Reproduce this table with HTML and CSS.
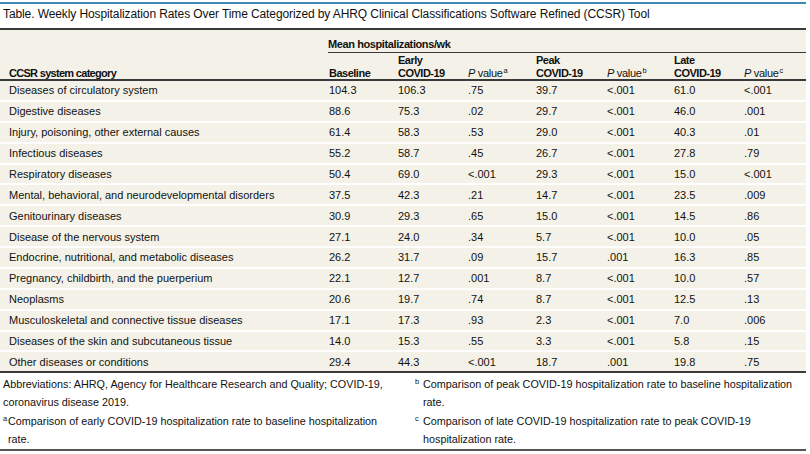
FILE: index.html
```html
<!DOCTYPE html>
<html lang="en">
<head>
<meta charset="utf-8">
<title>Weekly Hospitalization Rates</title>
<link rel="stylesheet" href="styles.css">
</head>
<body>
<div class="page">
  <div class="title">Table. Weekly Hospitalization Rates Over Time Categorized by AHRQ Clinical Classifications Software Refined (CCSR) Tool</div>
  <table class="data">
    <colgroup>
      <col class="w-cat"><col class="w1"><col class="w2"><col class="w3"><col class="w4"><col class="w5"><col class="w6"><col class="w7">
    </colgroup>
    <thead>
      <tr class="h1">
        <th rowspan="2" class="cat">CCSR system category</th>
        <th colspan="7" class="span"><div class="span-inner">Mean hospitalizations/wk</div></th>
      </tr>
      <tr class="h2">
        <th>Baseline</th>
        <th>Early<br>COVID-19</th>
        <th class="pv"><i>P</i> value<sup class="s">a</sup></th>
        <th>Peak<br>COVID-19</th>
        <th class="pv"><i>P</i> value<sup class="s">b</sup></th>
        <th>Late<br>COVID-19</th>
        <th class="pv"><i>P</i> value<sup class="s">c</sup></th>
      </tr>
    </thead>
    <tbody>
      <tr><td>Diseases of circulatory system</td><td>104.3</td><td>106.3</td><td>.75</td><td>39.7</td><td>&lt;.001</td><td>61.0</td><td>&lt;.001</td></tr>
      <tr><td>Digestive diseases</td><td>88.6</td><td>75.3</td><td>.02</td><td>29.7</td><td>&lt;.001</td><td>46.0</td><td>.001</td></tr>
      <tr><td>Injury, poisoning, other external causes</td><td>61.4</td><td>58.3</td><td>.53</td><td>29.0</td><td>&lt;.001</td><td>40.3</td><td>.01</td></tr>
      <tr><td>Infectious diseases</td><td>55.2</td><td>58.7</td><td>.45</td><td>26.7</td><td>&lt;.001</td><td>27.8</td><td>.79</td></tr>
      <tr><td>Respiratory diseases</td><td>50.4</td><td>69.0</td><td>&lt;.001</td><td>29.3</td><td>&lt;.001</td><td>15.0</td><td>&lt;.001</td></tr>
      <tr><td>Mental, behavioral, and neurodevelopmental disorders</td><td>37.5</td><td>42.3</td><td>.21</td><td>14.7</td><td>&lt;.001</td><td>23.5</td><td>.009</td></tr>
      <tr><td>Genitourinary diseases</td><td>30.9</td><td>29.3</td><td>.65</td><td>15.0</td><td>&lt;.001</td><td>14.5</td><td>.86</td></tr>
      <tr><td>Disease of the nervous system</td><td>27.1</td><td>24.0</td><td>.34</td><td>5.7</td><td>&lt;.001</td><td>10.0</td><td>.05</td></tr>
      <tr><td>Endocrine, nutritional, and metabolic diseases</td><td>26.2</td><td>31.7</td><td>.09</td><td>15.7</td><td>.001</td><td>16.3</td><td>.85</td></tr>
      <tr><td>Pregnancy, childbirth, and the puerperium</td><td>22.1</td><td>12.7</td><td>.001</td><td>8.7</td><td>&lt;.001</td><td>10.0</td><td>.57</td></tr>
      <tr><td>Neoplasms</td><td>20.6</td><td>19.7</td><td>.74</td><td>8.7</td><td>&lt;.001</td><td>12.5</td><td>.13</td></tr>
      <tr><td>Musculoskeletal and connective tissue diseases</td><td>17.1</td><td>17.3</td><td>.93</td><td>2.3</td><td>&lt;.001</td><td>7.0</td><td>.006</td></tr>
      <tr><td>Diseases of the skin and subcutaneous tissue</td><td>14.0</td><td>15.3</td><td>.55</td><td>3.3</td><td>&lt;.001</td><td>5.8</td><td>.15</td></tr>
      <tr><td>Other diseases or conditions</td><td>29.4</td><td>44.3</td><td>&lt;.001</td><td>18.7</td><td>.001</td><td>19.8</td><td>.75</td></tr>
    </tbody>
  </table>
  <div class="notes">
    <div class="col col-left">
      <p>Abbreviations: AHRQ, Agency for Healthcare Research and Quality; COVID-19,<br>coronavirus disease 2019.</p>
      <p class="fn"><span class="mk">a</span>Comparison of early COVID-19 hospitalization rate to baseline hospitalization<br>rate.</p>
    </div>
    <div class="col col-right">
      <p class="fn"><span class="mk">b</span>Comparison of peak COVID-19 hospitalization rate to baseline hospitalization<br>rate.</p>
      <p class="fn"><span class="mk">c</span>Comparison of late COVID-19 hospitalization rate to peak COVID-19<br>hospitalization rate.</p>
    </div>
  </div>
</div>
</body>
</html>
```

FILE: styles.css
```css
html, body {
  margin: 0;
  padding: 0;
  background: #ffffff;
}

body {
  font-family: "Liberation Sans", Arial, sans-serif;
  color: #111111;
}

.page {
  width: 806px;
  padding-top: 2px;
}

.title {
  border-top: 2px solid #3f8ab5;
  border-bottom: 2px solid #3a3a3a;
  padding: 0 3px 3px;
  font-size: 12px;
  letter-spacing: -0.1px;
  line-height: 21px;
  white-space: nowrap;
}

.data {
  width: 806px;
  table-layout: fixed;
  border-collapse: separate;
  border-spacing: 0;
  background: #f4f2e8;
  font-size: 11px;
}

.w-cat { width: 321px; }
.w1 { width: 69px; }
.w2 { width: 70px; }
.w3 { width: 68px; }
.w4 { width: 71px; }
.w5 { width: 67px; }
.w6 { width: 70px; }
.w7 { width: 70px; }

.data th {
  text-align: left;
  font-weight: bold;
  letter-spacing: -0.5px;
  padding: 1px 0 0 8px;
  line-height: 12.5px;
  vertical-align: bottom;
  white-space: nowrap;
}

.data th.cat {
  padding-left: 9px;
  letter-spacing: -0.7px;
  border-bottom: 2px solid #3a3a3a;
}

.data .h1 th.span {
  padding: 7px 0 0 7px;
  letter-spacing: -0.4px;
  line-height: 14px;
}

.span-inner {
  padding-bottom: 1px;
  border-bottom: 1px solid #3a3a3a;
}

.data .h2 th {
  border-bottom: 2px solid #3a3a3a;
}

.data th.pv {
  font-weight: normal;
  letter-spacing: -0.3px;
}

.s {
  font-size: 7.5px;
  line-height: 1;
  vertical-align: 4px;
  margin-left: 1px;
}

.data td {
  padding: 2.45px 0 2.45px 8px;
  line-height: 14px;
  white-space: nowrap;
}

.data td:first-child {
  padding-left: 9px;
}

.data tbody tr + tr td {
  border-top: 2px solid #ffffff;
}

.notes {
  display: grid;
  grid-template-columns: 412px 1fr;
  padding: 2px 0 0 3px;
  border-top: 2px solid #3a3a3a;
  border-bottom: 2px solid #555555;
  font-size: 10.8px;
  line-height: 18px;
}

.notes p {
  margin: 0 0 1px;
  white-space: nowrap;
}

.col-left .fn {
  padding-left: 5px;
  text-indent: -5px;
}

.col-left .fn .mk {
  width: 5px;
}

.col-right .fn {
  padding-left: 8px;
  text-indent: -8px;
}

.col-right .fn .mk {
  width: 8px;
}

.mk {
  display: inline-block;
  text-indent: 0;
  font-size: 7.5px;
  line-height: 1;
  vertical-align: 4px;
}
```
